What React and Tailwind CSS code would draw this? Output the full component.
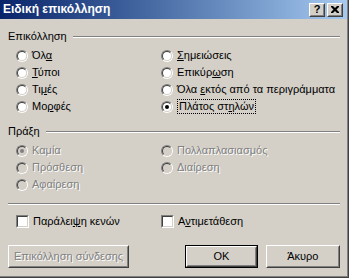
import React from "react";

// Classic Windows 2000 "Paste Special" dialog (Greek)

const font = "font-['Tahoma','Liberation_Sans',sans-serif]";
const disabledText = "text-[#808080] [text-shadow:1px_1px_0_#ffffff]";

const Radio = ({ checked, disabled }) => (
  <span className="inline-block w-3 h-3 shrink-0 rounded-full border border-t-[#808080] border-l-[#808080] border-b-white border-r-white">
    <span
      className={`flex w-full h-full items-center justify-center rounded-full border border-t-[#404040] border-l-[#404040] border-b-[#d4d0c8] border-r-[#d4d0c8] ${
        disabled ? "bg-[#d4d0c8]" : "bg-white"
      }`}
    >
      {checked && (
        <span className={`block w-1 h-1 rounded-full ${disabled ? "bg-[#808080]" : "bg-black"}`} />
      )}
    </span>
  </span>
);

const Checkbox = () => (
  <span className="inline-block w-[13px] h-[13px] shrink-0 border border-t-[#808080] border-l-[#808080] border-b-white border-r-white">
    <span className="block w-full h-full bg-white border border-t-[#404040] border-l-[#404040] border-b-[#d4d0c8] border-r-[#d4d0c8]" />
  </span>
);

// label split in [before, accessKey, after]
const Label = ({ parts, disabled, focus }) => (
  <span
    className={`${disabled ? disabledText : "text-black"} ${
      focus ? "border border-dotted border-black px-px leading-[13px]" : ""
    } whitespace-nowrap`}
  >
    {parts[0]}
    {parts[1] && !disabled && <span className="underline underline-offset-1">{parts[1]}</span>}
    {parts[1] && disabled && parts[1]}
    {parts[2]}
  </span>
);

const RadioRow = ({ parts, checked, disabled, focus }) => (
  <div className="flex items-center h-[17px] gap-1">
    <Radio checked={checked} disabled={disabled} />
    <Label parts={parts} disabled={disabled} focus={focus} />
  </div>
);

const GroupHeader = ({ title, className }) => (
  <div className={`flex items-center h-[13px] gap-[6px] ${className}`}>
    <span className="text-black whitespace-nowrap">{title}</span>
    <div className="flex-1 border-t border-t-[#808080] border-b border-b-white" />
  </div>
);

const Button = ({ children, isDefault, disabled, className }) => (
  <div className={`h-[23px] ${isDefault ? "border border-black" : ""} ${className}`}>
    <div className="w-full h-full border border-t-white border-l-white border-r-[#404040] border-b-[#404040]">
      <div
        className={`w-full h-full flex items-center justify-center border border-t-[#d4d0c8] border-l-[#d4d0c8] border-r-[#808080] border-b-[#808080] ${
          disabled ? disabledText : "text-black"
        }`}
      >
        {children}
      </div>
    </div>
  </div>
);

const TitleButton = ({ children }) => (
  <div className="w-4 h-[14px] bg-[#d4d0c8] border border-t-white border-l-white border-r-[#404040] border-b-[#404040]">
    <div className="w-full h-full flex items-center justify-center border border-t-[#d4d0c8] border-l-[#d4d0c8] border-r-[#808080] border-b-[#808080]">
      {children}
    </div>
  </div>
);

export default function App() {
  return (
    <div
      className={`w-[349px] h-[278px] bg-[#d4d0c8] text-[11px] leading-[13px] ${font} border-r border-b border-[#404040] overflow-hidden`}
    >
      <div className="h-full border-r border-b border-[#808080] flex flex-col">
        {/* TITLE BAR */}
        <div className="h-[19px] shrink-0 flex items-center justify-between pl-[3px] pr-[4px] bg-linear-to-r from-[#0a246a] to-[#a6caf0]">
          <span className="text-white font-bold text-[12px]">Ειδική επικόλληση</span>
          <div className="flex items-center gap-[2px]">
            <TitleButton>
              <span className="font-bold text-[11px] leading-none text-black">?</span>
            </TitleButton>
            <TitleButton>
              <svg width="8" height="7" viewBox="0 0 8 7">
                <path d="M0 0h2l2 2 2-2h2v1L5.5 3.5 8 6v1H6L4 5 2 7H0V6l2.5-2.5L0 1z" fill="#000" />
              </svg>
            </TitleButton>
          </div>
        </div>

        {/* BODY */}
        <div className="flex-1 pl-2 pr-[7px]">
          <GroupHeader title="Επικόλληση" className="mt-[11px]" />
          <div className="grid grid-cols-[145px_1fr] pl-2 mt-[4px]">
            <div>
              <RadioRow parts={["Όλ", "α", ""]} />
              <RadioRow parts={["", "Τ", "ύποι"]} />
              <RadioRow parts={["Τι", "μ", "ές"]} />
              <RadioRow parts={["Μο", "ρ", "φές"]} />
            </div>
            <div>
              <RadioRow parts={["", "Σ", "ημειώσεις"]} />
              <RadioRow parts={["Επικύρ", "ω", "ση"]} />
              <RadioRow parts={["Όλα ", "ε", "κτός από τα περιγράμματα"]} />
              <RadioRow parts={["Πλάτος στ", "η", "λών"]} checked focus />
            </div>
          </div>

          <GroupHeader title="Πράξη" className="mt-[10px]" />
          <div className="grid grid-cols-[145px_1fr] pl-2 mt-[4px]">
            <div>
              <RadioRow parts={["Καμία"]} checked disabled />
              <RadioRow parts={["Πρόσθεση"]} disabled />
              <RadioRow parts={["Αφαίρεση"]} disabled />
            </div>
            <div>
              <RadioRow parts={["Πολλαπλασιασμός"]} disabled />
              <RadioRow parts={["Διαίρεση"]} disabled />
            </div>
          </div>

          <div className="mt-[10px] border-t border-t-[#808080] border-b border-b-white" />

          <div className="grid grid-cols-[145px_1fr] pl-2 mt-[8px]">
            <div className="flex items-center h-[17px] gap-1">
              <Checkbox />
              <Label parts={["Παράλει", "ψ", "η κενών"]} />
            </div>
            <div className="flex items-center h-[17px] gap-1">
              <Checkbox />
              <Label parts={["Α", "ν", "τιμετάθεση"]} />
            </div>
          </div>

          <div className="flex mt-[15px]">
            <Button disabled className="w-[122px]">
              Επικόλληση σύνδεσης
            </Button>
            <Button isDefault className="w-[73px] ml-[56px]">
              OK
            </Button>
            <Button className="w-[75px] ml-[8px]">Άκυρο</Button>
          </div>
        </div>
      </div>
    </div>
  );
}
